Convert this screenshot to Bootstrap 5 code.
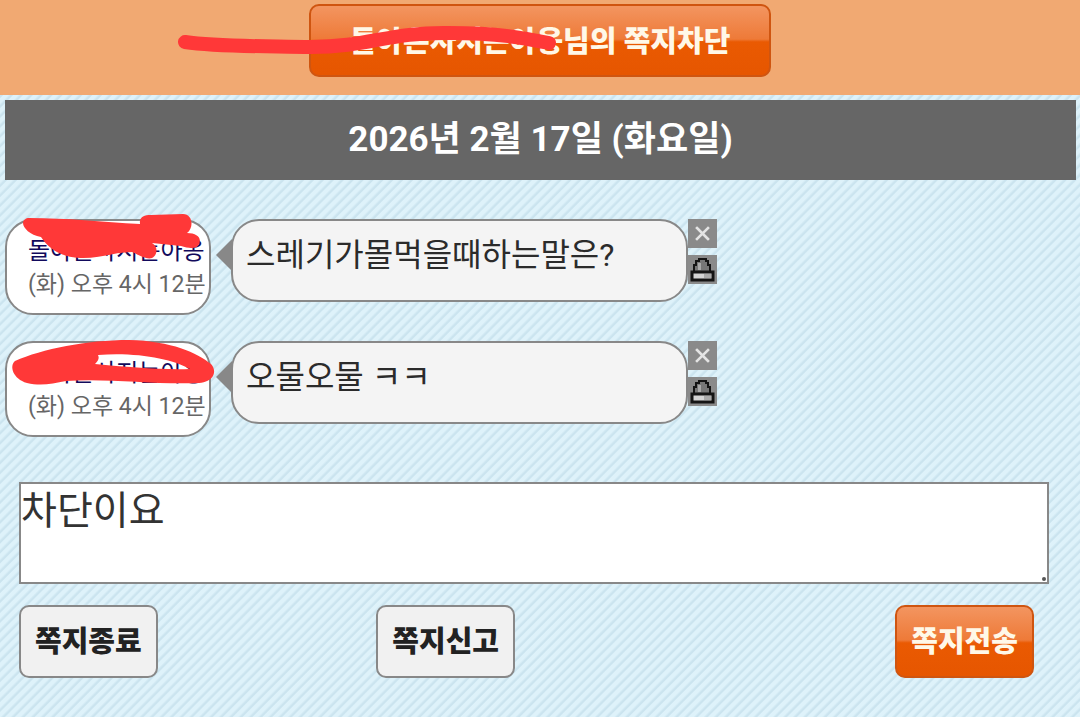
<!DOCTYPE html>
<html lang="ko">
<head>
<meta charset="utf-8">
<meta name="viewport" content="width=device-width, initial-scale=1">
<title>쪽지</title>
<link href="https://cdn.jsdelivr.net/npm/bootstrap@5.3.0/dist/css/bootstrap.min.css" rel="stylesheet">
<style>
body {
  font-family: Roboto, "Noto Sans CJK KR", sans-serif;
  color: #2b2b2b;
  background: repeating-linear-gradient(135deg, #def2fa 0 3px, #cbe4ef 5px, #cbe4ef 6px, #def2fa 7px);
}
.top-bar { background: #f1a972; padding: 4px 0 18px; margin-bottom: 5px; }
.msg-btn {
  font-size: 29px; line-height: 33px; font-weight: 900;
  height: 73px; padding: 2px 14px 0; border: 2px solid #888; border-radius: 10px;
  background: #f1f1f1; color: #222;
}
.msg-btn.hot {
  color: #fff8e8; border-color: #cf5510;
  background: linear-gradient(#f39560, #ee7a38 48%, #ea5a02 52%, #e65600);
}
.msg-btn.block-btn { padding: 4px 39px 0; }
.date-bar { background: #666; color: #fff; font-size: 35px; line-height: 80px; font-weight: 700; margin: 0 4px 0 5px; }
.thread { padding: 39px 0 0 5px; }
.msg-row { margin-bottom: 26px; }
.sender {
  width: 206px; height: 96px; padding: 13px 0 0 21px; margin-right: 5px;
  background: #fff; border: 2px solid #888; border-radius: 28px;
  font-size: 23px; line-height: 34px; color: #666; white-space: nowrap;
}
.sender a { color: #120a5c; font-size: 24px; }
.pointer { width: 16px; height: 32px; margin-top: 20px; background: #888; clip-path: polygon(0 50%, 100% 0, 100% 100%); }
.bubble {
  width: 457px; height: 83px; padding: 11px 13px; margin-left: -1px;
  background: #f4f4f4; border: 2px solid #888; border-radius: 28px;
  font-size: 32px; line-height: 46px;
}
.tools button { width: 29px; height: 29px; padding: 0; border: 0; background: #8a8a8a; }
.tools { gap: 7px; }
.scribble { pointer-events: none; fill: none; stroke: #ff3838; stroke-linecap: round; stroke-linejoin: round; overflow: visible; }
.compose { padding: 19px 31px 0 19px; }
.reply {
  height: 102px; padding: 0; border: 2px solid #888; background: #fff; resize: none;
  font-size: 39px; line-height: 54px; color: #333;
}
.grip { right: 3px; bottom: 3px; width: 4px; height: 4px; background: #555; }
.actions { padding: 21px 15px 39px 0; }
.report-col { padding-left: 19px; }
</style>
</head>
<body>
<svg class="d-none" aria-hidden="true">
  <symbol id="icon-close" viewBox="0 0 29 29"><path d="M9 9L20 20M20 9L9 20" stroke="#e4e4e4" stroke-width="2.6" stroke-linecap="square" fill="none"/></symbol>
  <symbol id="icon-siren" viewBox="0 0 29 29">
    <path d="M6 17V10H8V6H11V4H18V6H20V10H22V17Z" fill="#777" stroke="#151515" stroke-width="2"/>
    <path d="M10 15V8H13V15Z" fill="#aaa"/>
    <path d="M4 17H25V25H4Z" fill="#d4d4d4" stroke="#151515" stroke-width="3"/>
    <path d="M16 19H23V23H16Z" fill="#aaa"/>
  </symbol>
</svg>
<header class="top-bar text-center">
  <div class="position-relative d-inline-block">
    <button type="button" class="msg-btn hot block-btn">돌아온사지는아옹님의 쪽지차단</button>
    <svg class="scribble position-absolute top-0 start-0" width="464" height="73" aria-hidden="true"><path stroke-width="14" d="M-124 38C-90 43 -40 42 2 43C60 43 80 28 140 29C190 29 215 34 240 39"/></svg>
  </div>
</header>
<main>
  <h1 class="date-bar text-center">2026년 2월 17일 (화요일)</h1>
  <section class="thread">
    <div class="msg-row d-flex align-items-start">
      <div class="sender position-relative">
        <a href="#" class="d-block text-decoration-none">돌아온사지는아옹</a>
        <div>(화) 오후 4시 12분</div>
        <svg class="scribble position-absolute top-0 start-0" width="202" height="92" aria-hidden="true"><path style="fill:#ff3838" stroke="none" d="M22 -3C60 -3 95 1 133 3C132 -4 137 -6 144 -6L176 -7C186 -7 187 7 180 12C190 12 195 17 192 23C190 29 181 27 174 25L145 22C151 25 151 34 145 37C139 39 130 33 125 31C108 31 90 38 73 37C53 36 41 27 34 16C23 14 16 7 16 2C16 -1 19 -3 22 -3Z"/></svg>
      </div>
      <div class="pointer"></div>
      <div class="bubble">스레기가몰먹을때하는말은?</div>
      <div class="tools d-flex flex-column">
        <button type="button" aria-label="삭제" class="d-flex"><svg width="29" height="29"><use href="#icon-close"/></svg></button>
        <button type="button" aria-label="신고" class="d-flex"><svg width="29" height="29"><use href="#icon-siren"/></svg></button>
      </div>
    </div>
    <div class="msg-row d-flex align-items-start">
      <div class="sender position-relative">
        <a href="#" class="d-block text-decoration-none">돌아온사지는아옹</a>
        <div>(화) 오후 4시 12분</div>
        <svg class="scribble position-absolute top-0 start-0" width="202" height="92" aria-hidden="true"><path style="fill:#ff3838;fill-rule:evenodd" stroke="none" d="M8 18C35 6 80 -3 122 -3C165 -2 190 10 204 21C211 29 206 39 192 40C150 42 100 35 59 38C45 41 33 43 20 40C6 36 2 23 8 18ZM91 12C93 16 90 19 88 21C120 24 155 27 183 26C165 16 130 9 91 12Z"/></svg>
      </div>
      <div class="pointer"></div>
      <div class="bubble">오물오물 ㅋㅋ</div>
      <div class="tools d-flex flex-column">
        <button type="button" aria-label="삭제" class="d-flex"><svg width="29" height="29"><use href="#icon-close"/></svg></button>
        <button type="button" aria-label="신고" class="d-flex"><svg width="29" height="29"><use href="#icon-siren"/></svg></button>
      </div>
    </div>
  </section>
  <form class="compose">
    <div class="position-relative">
      <textarea class="reply d-block w-100" aria-label="쪽지 내용">차단이요</textarea>
      <span class="grip position-absolute rounded-circle"></span>
    </div>
    <div class="actions row gx-0">
      <div class="col-4"><button type="button" class="msg-btn">쪽지종료</button></div>
      <div class="col-4 report-col"><button type="button" class="msg-btn">쪽지신고</button></div>
      <div class="col-4 text-end"><button type="button" class="msg-btn hot">쪽지전송</button></div>
    </div>
  </form>
</main>
<script src="https://cdn.jsdelivr.net/npm/bootstrap@5.3.0/dist/js/bootstrap.bundle.min.js"></script>
</body>
</html>
